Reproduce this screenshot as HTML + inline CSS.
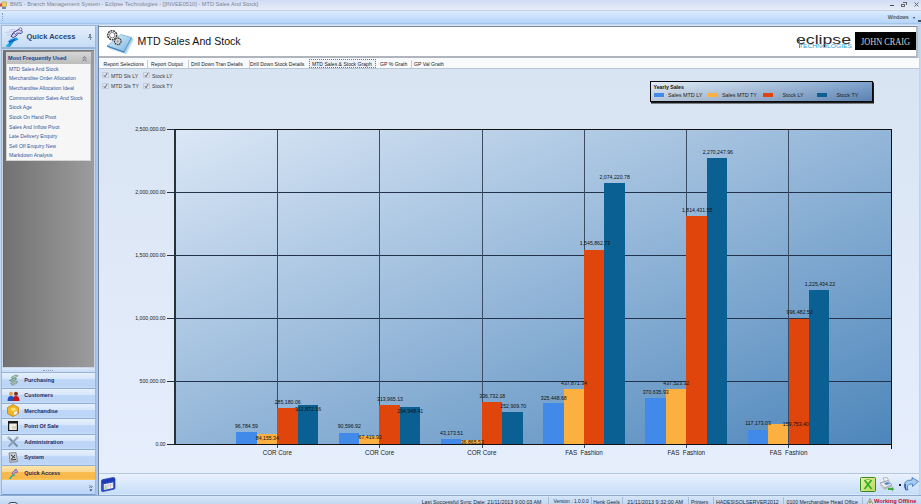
<!DOCTYPE html><html><head><meta charset='utf-8'><style>
*{margin:0;padding:0;box-sizing:border-box}
html,body{width:921px;height:504px;overflow:hidden;background:#c9dcf2}
body{position:relative;font-family:'Liberation Sans',sans-serif;color:#000}
.a{position:absolute}
.t{position:absolute;white-space:nowrap;line-height:1}
svg{display:block}
</style></head><body>
<div style="position:absolute;left:0;top:0;width:921px;height:11px;background:linear-gradient(#cfdcf4,#e8ecf8);border-bottom:1px solid #c3d2e3"></div>
<div style="position:absolute;left:10px;top:2px;font-size:5.65px;color:#7d8696;white-space:nowrap;line-height:1">BMS - Branch Management System - Eclipse Technologies - [[INVEE0510] - MTD Sales And Stock]</div>
<div style="position:absolute;left:0px;top:1px;width:8px;height:9px"><svg width="8" height="9" viewBox="0 0 8 9"><rect x="0" y="2.5" width="2.5" height="3" fill="#c85040"/><rect x="2" y="1" width="4.5" height="4.5" fill="#f0d070" stroke="#b89830" stroke-width="0.6"/><rect x="2" y="6" width="4" height="2" fill="#6a8ac0"/></svg></div>
<div style="position:absolute;left:890px;top:5px;width:4px;height:1px;background:#4a4a4a"></div>
<div style="position:absolute;left:901px;top:3.5px;width:4px;height:3px;border:1px solid #666"></div>
<div style="position:absolute;left:902.5px;top:2px;width:4px;height:3px;border-top:1px solid #666;border-right:1px solid #666"></div>
<div style="position:absolute;left:913.5px;top:1.5px;width:5px;height:5px"><svg width="5" height="5" viewBox="0 0 5 5"><path d="M0.5 0.5 L4.5 4.5 M4.5 0.5 L0.5 4.5" stroke="#555" stroke-width="0.9"/></svg></div>
<div style="position:absolute;left:0;top:11px;width:921px;height:13px;background:linear-gradient(#dcebfc,#b4d5fc);border-bottom:1px solid #a6c4e8"></div>
<div style="position:absolute;left:2px;top:13px;width:1px;height:8px;border-left:1px dotted #8aa0c0"></div>
<div style="position:absolute;left:887.8px;top:15px;font-size:5.1px;color:#1a1a1a;white-space:nowrap;line-height:1">Windows</div>
<div style="position:absolute;left:912.5px;top:16.5px;width:0;height:0;border-left:1.6px solid transparent;border-right:1.6px solid transparent;border-top:2px solid #333"></div>
<div style="position:absolute;left:918px;top:20px;width:3px;height:2px;background:#405060"></div>
<div style="position:absolute;left:0;top:24px;width:921px;height:471px;background:#c4d8f0"></div>
<div style="position:absolute;left:1px;top:25px;width:95px;height:470px;background:#8fb3df;border:1px solid #9bb8dc"></div>
<div style="position:absolute;left:2px;top:26px;width:93px;height:22px;background:linear-gradient(#e4eefb,#c6dcf6);border-bottom:1px solid #9ab4d6"></div>
<div style="position:absolute;left:26.5px;top:32.6px;font-size:7.5px;font-weight:bold;color:#2a4672;white-space:nowrap;line-height:1">Quick Access</div>
<div style="position:absolute;left:3px;top:27px;width:22px;height:21px"><svg width="22" height="21" viewBox="0 0 22 21"><path d="M2 5.5 L11 4.5 M4 8 L10 7.5 M6 3 L12 2.5" stroke="#b0b0d8" stroke-width="0.6"/><path d="M8 9.5 L11 5 L14 3.5 L17 2 L19.5 5 L18 6.5 L15.5 6 L13 9 L10.5 10.5 Z" fill="#dcd8f8" stroke="#2a2a78" stroke-width="0.9"/><circle cx="17.5" cy="2.2" r="1.4" fill="#fff" stroke="#2a2a78" stroke-width="0.6"/><path d="M9 7 L12 6.5 M12 8 L14.5 5.5" stroke="#4a4aa0" stroke-width="0.7"/><path d="M3 19.5 L6.5 15.5 L4.5 14.5 L8 12 L13.5 10.5 L15.5 12.5 L11 14.5 L7 20 Z" fill="#1e98dc"/><path d="M6 15.5 L12 12.5" stroke="#0c60b8" stroke-width="1.4"/><path d="M3 19.5 L6 16.5" stroke="#2ab8e0" stroke-width="1.2"/></svg></div>
<div style="position:absolute;left:89px;top:34px;width:2px;height:3px;background:#7a8aa4"></div>
<div style="position:absolute;left:88px;top:37px;width:4px;height:1px;background:#7a8aa4"></div>
<div style="position:absolute;left:89.5px;top:38px;width:1px;height:2px;background:#7a8aa4"></div>
<div style="position:absolute;left:2px;top:48.5px;width:93px;height:319px;background:#c8d6e8"></div>
<div style="position:absolute;left:3px;top:50px;width:91px;height:316.5px;background:linear-gradient(90deg,#727272,#9c9c9c);border-top:1px solid #7a7a7a;border-left:1px solid #6a6a6a"></div>
<div style="position:absolute;left:5.5px;top:52.3px;width:85.6px;height:108.5px;background:#f6f6f6;border:1px solid #d4d4d4"></div>
<div style="position:absolute;left:6.5px;top:53.3px;width:84px;height:10.7px;background:linear-gradient(#d4d4d4,#bcbcbc)"></div>
<div style="position:absolute;left:8px;top:55.5px;font-size:5.6px;font-weight:bold;color:#223c8c;white-space:nowrap;line-height:1">Most Frequently Used</div>
<div style="position:absolute;left:81.5px;top:55.5px;width:5px;height:6px"><svg width="5" height="6" viewBox="0 0 5 6"><path d="M0.6 2.6 L2.5 0.8 L4.4 2.6 M0.6 5 L2.5 3.2 L4.4 5" stroke="#505050" stroke-width="0.8" fill="none"/></svg></div>
<div style="position:absolute;left:9px;top:66.8px;font-size:5.1px;color:#34569a;white-space:nowrap;line-height:1">MTD Sales And Stock</div>
<div style="position:absolute;left:9px;top:76.4px;font-size:5.1px;color:#34569a;white-space:nowrap;line-height:1">Merchandise Order Allocation</div>
<div style="position:absolute;left:9px;top:86.0px;font-size:5.1px;color:#34569a;white-space:nowrap;line-height:1">Merchandise Allocation Ideal</div>
<div style="position:absolute;left:9px;top:95.7px;font-size:5.1px;color:#34569a;white-space:nowrap;line-height:1">Communication Sales And Stock</div>
<div style="position:absolute;left:9px;top:105.3px;font-size:5.1px;color:#34569a;white-space:nowrap;line-height:1">Stock Age</div>
<div style="position:absolute;left:9px;top:114.9px;font-size:5.1px;color:#34569a;white-space:nowrap;line-height:1">Stock On Hand Pivot</div>
<div style="position:absolute;left:9px;top:124.5px;font-size:5.1px;color:#34569a;white-space:nowrap;line-height:1">Sales And Inflow Pivot</div>
<div style="position:absolute;left:9px;top:134.1px;font-size:5.1px;color:#34569a;white-space:nowrap;line-height:1">Late Delivery Enquiry</div>
<div style="position:absolute;left:9px;top:143.8px;font-size:5.1px;color:#34569a;white-space:nowrap;line-height:1">Sell Off Enquiry New</div>
<div style="position:absolute;left:9px;top:153.4px;font-size:5.1px;color:#34569a;white-space:nowrap;line-height:1">Markdown Analysis</div>
<div style="position:absolute;left:2px;top:367.5px;width:93px;height:5.8px;background:linear-gradient(#dae8fa,#c8dcf6);border-bottom:1px solid #9ab4d6"></div>
<div style="position:absolute;left:43px;top:370px;width:10px;height:1px;border-top:1px dotted #8a9ab8"></div>
<div style="position:absolute;left:2px;top:373.20px;width:93px;height:15.42px;background:linear-gradient(#e6f0fd 0%,#d6e6fb 40%,#bed6f7 44%,#bcd5f7 85%,#c6dcf8 100%);border-bottom:1px solid #92aed4"></div>
<div style="position:absolute;left:24.3px;top:378.00px;font-size:5.5px;font-weight:bold;color:#1c2c60;white-space:nowrap;line-height:1">Purchasing</div>
<div style="position:absolute;left:8px;top:374.20px;width:11px;height:12px"><svg width="11" height="12" viewBox="0 0 11 12"><path d="M3 3.5 L8 0.8 L10.2 1.8 L5.2 4.6 Z" fill="#b8d4c0" stroke="#5a8068" stroke-width="0.6"/><path d="M1.5 6.5 L6.5 3.8 L8.7 4.8 L3.7 7.6 Z" fill="#9cc4a8" stroke="#4a7058" stroke-width="0.6"/><path d="M2.5 9.5 L7.5 6.8 L9.7 7.8 L4.7 10.6 Z" fill="#b0ccb8" stroke="#607868" stroke-width="0.6"/><path d="M3 10.5 L5 11.5 L9.5 9" stroke="#8a9a90" stroke-width="0.6" fill="none"/></svg></div>
<div style="position:absolute;left:2px;top:388.62px;width:93px;height:15.42px;background:linear-gradient(#e6f0fd 0%,#d6e6fb 40%,#bed6f7 44%,#bcd5f7 85%,#c6dcf8 100%);border-bottom:1px solid #92aed4"></div>
<div style="position:absolute;left:24.3px;top:393.42px;font-size:5.5px;font-weight:bold;color:#1c2c60;white-space:nowrap;line-height:1">Customers</div>
<div style="position:absolute;left:7px;top:390.62px;width:13px;height:10px"><svg width="13" height="10" viewBox="0 0 13 10"><circle cx="4" cy="2.8" r="2" fill="#e0a050"/><path d="M0.5 10 Q0.5 5 4 5 Q7.5 5 7.5 10 Z" fill="#2050c0"/><circle cx="9" cy="2.8" r="2" fill="#803020"/><path d="M5.5 10 Q5.5 5 9 5 Q12.5 5 12.5 10 Z" fill="#c01818"/></svg></div>
<div style="position:absolute;left:2px;top:404.04px;width:93px;height:15.42px;background:linear-gradient(#e6f0fd 0%,#d6e6fb 40%,#bed6f7 44%,#bcd5f7 85%,#c6dcf8 100%);border-bottom:1px solid #92aed4"></div>
<div style="position:absolute;left:24.3px;top:408.84px;font-size:5.5px;font-weight:bold;color:#1c2c60;white-space:nowrap;line-height:1">Merchandise</div>
<div style="position:absolute;left:7px;top:404.04px;width:12px;height:13px"><svg width="12" height="13" viewBox="0 0 12 13"><path d="M6 0.5 L11.5 3.5 L11.5 9.5 L6 12.5 L0.5 9.5 L0.5 3.5 Z" fill="#f0b820" stroke="#c87810" stroke-width="0.8"/><path d="M3 5 L7 3.5 L9.5 5.5 L6 7.5 Z" fill="#fde078"/><path d="M7 8 L10 7 L10 10 L7 11 Z" fill="#f8f0e0"/></svg></div>
<div style="position:absolute;left:2px;top:419.46px;width:93px;height:15.42px;background:linear-gradient(#e6f0fd 0%,#d6e6fb 40%,#bed6f7 44%,#bcd5f7 85%,#c6dcf8 100%);border-bottom:1px solid #92aed4"></div>
<div style="position:absolute;left:24.3px;top:424.26px;font-size:5.5px;font-weight:bold;color:#1c2c60;white-space:nowrap;line-height:1">Point Of Sale</div>
<div style="position:absolute;left:8px;top:421.46px;width:10px;height:10px"><svg width="10" height="10" viewBox="0 0 10 10"><rect x="0" y="0" width="10" height="10" fill="#1a1a1a"/><rect x="1.2" y="2.5" width="7.6" height="6.5" fill="#f0ece0"/><rect x="4" y="5" width="4" height="3" fill="#d8d0c0"/></svg></div>
<div style="position:absolute;left:2px;top:434.88px;width:93px;height:15.42px;background:linear-gradient(#e6f0fd 0%,#d6e6fb 40%,#bed6f7 44%,#bcd5f7 85%,#c6dcf8 100%);border-bottom:1px solid #92aed4"></div>
<div style="position:absolute;left:24.3px;top:439.68px;font-size:5.5px;font-weight:bold;color:#1c2c60;white-space:nowrap;line-height:1">Administration</div>
<div style="position:absolute;left:7px;top:435.88px;width:12px;height:12px"><svg width="12" height="12" viewBox="0 0 12 12"><path d="M1.5 1.5 L10.5 10.5" stroke="#7890a8" stroke-width="2"/><path d="M10.5 1.5 L1.5 10.5" stroke="#8aa0b8" stroke-width="1.8"/><circle cx="1.8" cy="1.8" r="1.5" fill="#a8b8c8"/><circle cx="10.2" cy="1.8" r="1.4" fill="#9aacbf"/></svg></div>
<div style="position:absolute;left:2px;top:450.30px;width:93px;height:15.42px;background:linear-gradient(#e6f0fd 0%,#d6e6fb 40%,#bed6f7 44%,#bcd5f7 85%,#c6dcf8 100%);border-bottom:1px solid #92aed4"></div>
<div style="position:absolute;left:24.3px;top:455.10px;font-size:5.5px;font-weight:bold;color:#1c2c60;white-space:nowrap;line-height:1">System</div>
<div style="position:absolute;left:8px;top:452.30px;width:10px;height:11px"><svg width="10" height="11" viewBox="0 0 10 11"><path d="M1 1 L8 0.5 L9.5 9.5 L2 10.5 Z" fill="#c8ccd0" stroke="#6a7078" stroke-width="0.7"/><path d="M3 3 L7 6 M7 3 L3.5 7 M3 8 L8 7.5" stroke="#303840" stroke-width="1"/></svg></div>
<div style="position:absolute;left:2px;top:465.72px;width:93px;height:15.42px;background:linear-gradient(#fde4a8 0%,#fcd890 40%,#f9bc50 44%,#f8b848 85%,#fac868 100%);border-bottom:1px solid #d8a050"></div>
<div style="position:absolute;left:24.3px;top:470.52px;font-size:5.5px;font-weight:bold;color:#1c2c60;white-space:nowrap;line-height:1">Quick Access</div>
<div style="position:absolute;left:7px;top:467.72px;width:12px;height:12px"><svg width="12" height="12" viewBox="0 0 22 21"><path d="M9 9.5 L12.5 5 L15.5 3 L17.5 4 L20 6.5 L18 8 L15 7.5 L12 11 Z" fill="#c8a8e8" stroke="#5a3a98" stroke-width="1.2"/><circle cx="16.5" cy="2.8" r="1.6" fill="#e8d8f8" stroke="#5a3a98" stroke-width="0.9"/><path d="M3.5 19.5 L7.5 14 L9 12.5 L14 11 L15.5 13 L10.5 14.5 L6 20 Z" fill="#18a8b0"/></svg></div>
<div style="position:absolute;left:2px;top:480px;width:93px;height:15px;background:linear-gradient(#d8e8fc,#b8d4fa);border-bottom:1px solid #7a9ccc"></div>
<div style="position:absolute;left:88.5px;top:485px;width:4px;height:7px"><svg width="4" height="7" viewBox="0 0 4 7"><path d="M0.3 0.5 L1.5 1.7 L0.3 2.9 M2 0.5 L3.2 1.7 L2 2.9" stroke="#222" stroke-width="0.6" fill="none"/><path d="M0.5 4.5 L3.3 4.5 L1.9 6.3 Z" fill="#222"/></svg></div>
<div style="position:absolute;left:96px;top:25px;width:2px;height:470px;background:#aac6ea"></div>
<div style="position:absolute;left:98px;top:25px;width:822px;height:470px;background:#dde8f6;border-left:1px solid #6f86a6;border-right:2px solid #c0d4ec"></div>
<div style="position:absolute;left:99px;top:26px;width:819px;height:32px;background:#fff;border-top:1px solid #7a8494;border-bottom:2px solid #b0b4bc;border-right:2px solid #b8bcc4"></div>
<div style="position:absolute;left:137.6px;top:35.9px;font-size:10.6px;color:#111;white-space:nowrap;line-height:1">MTD Sales And Stock</div>
<div style="position:absolute;left:104px;top:27px;width:34px;height:30px"><svg width="34" height="30" viewBox="0 0 34 30"><defs><linearGradient id="pg" x1="0" y1="0" x2="1" y2="1"><stop offset="0" stop-color="#e0f0fa"/><stop offset="1" stop-color="#7ab8e0"/></linearGradient></defs><path d="M5 21 L19 9.5 L29.5 12.5 L22 27 Z" fill="#cfe6f6" stroke="#9ccbe8" stroke-width="0.5"/><path d="M4 20 L18 8.5 L28.5 11.5 L21 26 Z" fill="#b4daf2" stroke="#80b8e0" stroke-width="0.5"/><path d="M3 19 L17 7.5 L27.5 10.5 L20 25 Z" fill="url(#pg)" stroke="#5a9ed0" stroke-width="0.6"/><path d="M3 19 L20 25" stroke="#3a7ab8" stroke-width="1.1"/><path d="M20 25 L27.5 10.5" stroke="#4a88c0" stroke-width="0.7"/><circle cx="8.2" cy="8.2" r="4.5" fill="#fff" stroke="#3c3c3c" stroke-width="1.5" stroke-dasharray="2 0.7"/><circle cx="8.2" cy="8.2" r="2.7" fill="#fff" stroke="#6a6a6a" stroke-width="0.9"/><circle cx="13.8" cy="14.3" r="3.3" fill="#c8ccd0" stroke="#404040" stroke-width="1.2" stroke-dasharray="1.6 0.6"/><circle cx="13.8" cy="14.3" r="1.7" fill="#a0a4aa" stroke="#e8e8e8" stroke-width="0.7"/></svg></div>
<div style="position:absolute;left:795.5px;top:32.5px;font-size:13.5px;color:#2a2a2a;white-space:nowrap;line-height:1;transform:scaleX(1.31);transform-origin:left top">eclipse</div>
<div style="position:absolute;left:798.5px;top:44.6px;font-size:4.9px;color:#2a9cc8;white-space:nowrap;line-height:1;transform:scaleX(1.36);transform-origin:left top">TECHNOLOGIES</div>
<div style="position:absolute;left:799px;top:39px;width:1px;height:9px;background:#2a9cc8"></div>
<div style="position:absolute;left:855px;top:32px;width:61px;height:18px;background:#000"></div>
<div style="position:absolute;left:861px;top:37px;font-family:'Liberation Serif',serif;font-size:9.8px;color:#d0d0d0;white-space:nowrap;line-height:1;transform:scaleX(0.845);transform-origin:left top">JOHN CRAIG</div>
<div style="position:absolute;left:99px;top:58px;width:820px;height:11px;background:#f8fafc;border-bottom:1px solid #b9c6d6"></div>
<div style="position:absolute;left:309px;top:58.5px;width:67px;height:9.5px;border:1px dotted #707880;background:#eef2f8"></div>
<div style="position:absolute;left:103.5px;top:61.5px;font-size:5.1px;color:#222;white-space:nowrap;line-height:1">Report Selections</div>
<div style="position:absolute;left:151px;top:61.5px;font-size:5.1px;color:#222;white-space:nowrap;line-height:1">Report Output</div>
<div style="position:absolute;left:191px;top:61.5px;font-size:5.1px;color:#222;white-space:nowrap;line-height:1">Drill Down Tran Details</div>
<div style="position:absolute;left:250px;top:61.5px;font-size:5.1px;color:#222;white-space:nowrap;line-height:1">Drill Down Stock Details</div>
<div style="position:absolute;left:312px;top:61.5px;font-size:5.1px;color:#222;white-space:nowrap;line-height:1">MTD Sales &amp; Stock Graph</div>
<div style="position:absolute;left:380px;top:61.5px;font-size:5.1px;color:#222;white-space:nowrap;line-height:1">GP % Grath</div>
<div style="position:absolute;left:414px;top:61.5px;font-size:5.1px;color:#222;white-space:nowrap;line-height:1">GP Val Grath</div>
<div style="position:absolute;left:147px;top:59.5px;width:1px;height:8.5px;background:#c4ccd8"></div>
<div style="position:absolute;left:188px;top:59.5px;width:1px;height:8.5px;background:#c4ccd8"></div>
<div style="position:absolute;left:248.5px;top:59.5px;width:1px;height:8.5px;background:#c4ccd8"></div>
<div style="position:absolute;left:410.5px;top:59.5px;width:1px;height:8.5px;background:#c4ccd8"></div>
<div style="position:absolute;left:99px;top:69px;width:820px;height:404px;background:linear-gradient(#d8e4f2,#e6eefc)"></div>
<div style="position:absolute;left:102px;top:72px;width:6.5px;height:6px;border:1px solid #c4ccd8;background:#dfe6f0"></div>
<div style="position:absolute;left:102px;top:72px;width:7px;height:6px"><svg width="7" height="6" viewBox="0 0 7 6"><path d="M1.8 3.2 L3 4.8 L5 1" fill="none" stroke="#4a5060" stroke-width="0.8"/></svg></div>
<div style="position:absolute;left:111px;top:73.5px;font-size:5.2px;color:#3a3a3a;white-space:nowrap;line-height:1">MTD Sls LY</div>
<div style="position:absolute;left:143px;top:72px;width:6.5px;height:6px;border:1px solid #c4ccd8;background:#dfe6f0"></div>
<div style="position:absolute;left:143px;top:72px;width:7px;height:6px"><svg width="7" height="6" viewBox="0 0 7 6"><path d="M1.8 3.2 L3 4.8 L5 1" fill="none" stroke="#4a5060" stroke-width="0.8"/></svg></div>
<div style="position:absolute;left:152px;top:73.5px;font-size:5.2px;color:#3a3a3a;white-space:nowrap;line-height:1">Stock LY</div>
<div style="position:absolute;left:102px;top:82.5px;width:6.5px;height:6px;border:1px solid #c4ccd8;background:#dfe6f0"></div>
<div style="position:absolute;left:102px;top:82.5px;width:7px;height:6px"><svg width="7" height="6" viewBox="0 0 7 6"><path d="M1.8 3.2 L3 4.8 L5 1" fill="none" stroke="#4a5060" stroke-width="0.8"/></svg></div>
<div style="position:absolute;left:111px;top:84.0px;font-size:5.2px;color:#3a3a3a;white-space:nowrap;line-height:1">MTD Sls TY</div>
<div style="position:absolute;left:143px;top:82.5px;width:6.5px;height:6px;border:1px solid #c4ccd8;background:#dfe6f0"></div>
<div style="position:absolute;left:143px;top:82.5px;width:7px;height:6px"><svg width="7" height="6" viewBox="0 0 7 6"><path d="M1.8 3.2 L3 4.8 L5 1" fill="none" stroke="#4a5060" stroke-width="0.8"/></svg></div>
<div style="position:absolute;left:152px;top:84.0px;font-size:5.2px;color:#3a3a3a;white-space:nowrap;line-height:1">Stock TY</div>
<div style="position:absolute;left:649.5px;top:80.8px;width:223px;height:21px;background:linear-gradient(rgba(255,255,255,0.12),rgba(0,20,70,0.16)),linear-gradient(90deg,#dfeaf5 0%,#b0c8e2 45%,#6c96c6 100%);border:1px solid #0a0a0a;box-shadow:1px 1.5px 0 #1a1a1a"></div>
<div style="position:absolute;left:653.5px;top:84.5px;font-size:5.2px;font-weight:bold;color:#111;white-space:nowrap;line-height:1">Yearly Sales</div>
<div style="position:absolute;left:654px;top:93px;width:10px;height:4px;background:#418aea"></div>
<div style="position:absolute;left:668px;top:92.5px;font-size:5.4px;color:#222;white-space:nowrap;line-height:1">Sales MTD LY</div>
<div style="position:absolute;left:708px;top:93px;width:10px;height:4px;background:#fbb040"></div>
<div style="position:absolute;left:722px;top:92.5px;font-size:5.4px;color:#222;white-space:nowrap;line-height:1">Sales MTD TY</div>
<div style="position:absolute;left:762.5px;top:93px;width:10px;height:4px;background:#e0460c"></div>
<div style="position:absolute;left:782.5px;top:92.5px;font-size:5.4px;color:#222;white-space:nowrap;line-height:1">Stock LY</div>
<div style="position:absolute;left:816.5px;top:93px;width:10px;height:4px;background:#0a6093"></div>
<div style="position:absolute;left:836.5px;top:92.5px;font-size:5.4px;color:#222;white-space:nowrap;line-height:1">Stock TY</div>
<div style="position:absolute;left:174.5px;top:129.3px;width:717.0px;height:315.0px;background:linear-gradient(to bottom right,#dbe7f6,#4d86bb)"></div>
<div style="position:absolute;left:167px;top:444px;width:724.5px;height:1px;background:#1a2638"></div>
<div style="position:absolute;right:755.5px;top:441.80px;font-size:5.2px;color:#222;white-space:nowrap;line-height:1">0.00</div>
<div style="position:absolute;left:167px;top:381px;width:724.5px;height:1px;background:#22324a"></div>
<div style="position:absolute;right:755.5px;top:378.80px;font-size:5.2px;color:#222;white-space:nowrap;line-height:1">500,000.00</div>
<div style="position:absolute;left:167px;top:318px;width:724.5px;height:1px;background:#22324a"></div>
<div style="position:absolute;right:755.5px;top:315.80px;font-size:5.2px;color:#222;white-space:nowrap;line-height:1">1,000,000.00</div>
<div style="position:absolute;left:167px;top:255px;width:724.5px;height:1px;background:#22324a"></div>
<div style="position:absolute;right:755.5px;top:252.80px;font-size:5.2px;color:#222;white-space:nowrap;line-height:1">1,500,000.00</div>
<div style="position:absolute;left:167px;top:192px;width:724.5px;height:1px;background:#22324a"></div>
<div style="position:absolute;right:755.5px;top:189.80px;font-size:5.2px;color:#222;white-space:nowrap;line-height:1">2,000,000.00</div>
<div style="position:absolute;left:167px;top:129px;width:724.5px;height:1px;background:#22324a"></div>
<div style="position:absolute;right:755.5px;top:126.80px;font-size:5.2px;color:#222;white-space:nowrap;line-height:1">2,500,000.00</div>
<div style="position:absolute;left:277px;top:129.3px;width:1px;height:319.0px;background:#3c4c62"></div>
<div style="position:absolute;left:262.65px;top:449.60px;font-size:6.28px;color:#222;white-space:nowrap;line-height:1">COR Core</div>
<div style="position:absolute;left:379px;top:129.3px;width:1px;height:319.0px;background:#3c4c62"></div>
<div style="position:absolute;left:364.91px;top:449.60px;font-size:6.28px;color:#222;white-space:nowrap;line-height:1">COR Core</div>
<div style="position:absolute;left:482px;top:129.3px;width:1px;height:319.0px;background:#3c4c62"></div>
<div style="position:absolute;left:467.17px;top:449.60px;font-size:6.28px;color:#222;white-space:nowrap;line-height:1">COR Core</div>
<div style="position:absolute;left:584px;top:129.3px;width:1px;height:319.0px;background:#3c4c62"></div>
<div style="position:absolute;left:565.23px;top:449.60px;font-size:6.28px;color:#222;white-space:nowrap;line-height:1">FAS&nbsp; Fashion</div>
<div style="position:absolute;left:686px;top:129.3px;width:1px;height:319.0px;background:#3c4c62"></div>
<div style="position:absolute;left:667.49px;top:449.60px;font-size:6.28px;color:#222;white-space:nowrap;line-height:1">FAS&nbsp; Fashion</div>
<div style="position:absolute;left:788px;top:129.3px;width:1px;height:319.0px;background:#3c4c62"></div>
<div style="position:absolute;left:769.75px;top:449.60px;font-size:6.28px;color:#222;white-space:nowrap;line-height:1">FAS&nbsp; Fashion</div>
<div style="position:absolute;left:236.40px;top:432.11px;width:20.40px;height:12.19px;background:#418aea"></div>
<div style="position:absolute;left:256.80px;top:433.70px;width:20.40px;height:10.60px;background:#fbb040"></div>
<div style="position:absolute;left:277.20px;top:408.37px;width:20.40px;height:35.93px;background:#e0460c"></div>
<div style="position:absolute;left:297.60px;top:404.88px;width:20.40px;height:39.42px;background:#0a6093"></div>
<div style="position:absolute;left:338.66px;top:432.88px;width:20.40px;height:11.42px;background:#418aea"></div>
<div style="position:absolute;left:359.06px;top:435.81px;width:20.40px;height:8.49px;background:#fbb040"></div>
<div style="position:absolute;left:379.46px;top:404.74px;width:20.40px;height:39.56px;background:#e0460c"></div>
<div style="position:absolute;left:399.86px;top:407.14px;width:20.40px;height:37.16px;background:#0a6093"></div>
<div style="position:absolute;left:440.92px;top:438.86px;width:20.40px;height:5.44px;background:#418aea"></div>
<div style="position:absolute;left:461.32px;top:439.65px;width:20.40px;height:4.65px;background:#fbb040"></div>
<div style="position:absolute;left:481.72px;top:401.87px;width:20.40px;height:42.43px;background:#e0460c"></div>
<div style="position:absolute;left:502.12px;top:412.43px;width:20.40px;height:31.87px;background:#0a6093"></div>
<div style="position:absolute;left:543.18px;top:403.29px;width:20.40px;height:41.01px;background:#418aea"></div>
<div style="position:absolute;left:563.58px;top:389.13px;width:20.40px;height:55.17px;background:#fbb040"></div>
<div style="position:absolute;left:583.98px;top:249.52px;width:20.40px;height:194.78px;background:#e0460c"></div>
<div style="position:absolute;left:604.38px;top:182.95px;width:20.40px;height:261.35px;background:#0a6093"></div>
<div style="position:absolute;left:645.44px;top:397.60px;width:20.40px;height:46.70px;background:#418aea"></div>
<div style="position:absolute;left:665.84px;top:389.17px;width:20.40px;height:55.13px;background:#fbb040"></div>
<div style="position:absolute;left:686.24px;top:215.68px;width:20.40px;height:228.62px;background:#e0460c"></div>
<div style="position:absolute;left:706.64px;top:158.25px;width:20.40px;height:286.05px;background:#0a6093"></div>
<div style="position:absolute;left:747.70px;top:429.54px;width:20.40px;height:14.76px;background:#418aea"></div>
<div style="position:absolute;left:768.10px;top:424.17px;width:20.40px;height:20.13px;background:#fbb040"></div>
<div style="position:absolute;left:788.50px;top:318.74px;width:20.40px;height:125.56px;background:#e0460c"></div>
<div style="position:absolute;left:808.90px;top:289.90px;width:20.40px;height:154.40px;background:#0a6093"></div>
<div style="position:absolute;left:174.0px;top:129.3px;width:2px;height:315.0px;background:#2a3038"></div>
<div style="position:absolute;left:890.5px;top:129.3px;width:1.5px;height:320.0px;background:#111"></div>
<div style="position:absolute;left:174.5px;top:128.8px;width:717.0px;height:1.5px;background:#111"></div>
<div style="position:absolute;left:174.5px;top:443.8px;width:717.0px;height:1.5px;background:#111"></div>
<div style="position:absolute;left:234.90px;top:424.20px;font-size:5.2px;color:#111;white-space:nowrap;line-height:1">96,784.59</div>
<div style="position:absolute;left:255.80px;top:435.60px;font-size:5.2px;color:#111;white-space:nowrap;line-height:1">84,155.34</div>
<div style="position:absolute;left:274.70px;top:400.10px;font-size:5.2px;color:#111;white-space:nowrap;line-height:1">285,180.06</div>
<div style="position:absolute;left:295.10px;top:406.60px;font-size:5.2px;color:#111;white-space:nowrap;line-height:1">312,872.16</div>
<div style="position:absolute;left:337.70px;top:424.40px;font-size:5.2px;color:#111;white-space:nowrap;line-height:1">90,596.92</div>
<div style="position:absolute;left:358.60px;top:435.10px;font-size:5.2px;color:#111;white-space:nowrap;line-height:1">67,419.93</div>
<div style="position:absolute;left:377.00px;top:396.70px;font-size:5.2px;color:#111;white-space:nowrap;line-height:1">313,965.13</div>
<div style="position:absolute;left:397.30px;top:409.30px;font-size:5.2px;color:#111;white-space:nowrap;line-height:1">294,948.41</div>
<div style="position:absolute;left:440.00px;top:430.70px;font-size:5.2px;color:#111;white-space:nowrap;line-height:1">43,173.51</div>
<div style="position:absolute;left:460.70px;top:440.10px;font-size:5.2px;color:#111;white-space:nowrap;line-height:1">36,865.53</div>
<div style="position:absolute;left:479.30px;top:394.10px;font-size:5.2px;color:#111;white-space:nowrap;line-height:1">336,732.18</div>
<div style="position:absolute;left:500.30px;top:404.40px;font-size:5.2px;color:#111;white-space:nowrap;line-height:1">252,909.70</div>
<div style="position:absolute;left:540.80px;top:395.50px;font-size:5.2px;color:#111;white-space:nowrap;line-height:1">325,448.68</div>
<div style="position:absolute;left:561.00px;top:380.70px;font-size:5.2px;color:#111;white-space:nowrap;line-height:1">437,871.34</div>
<div style="position:absolute;left:579.80px;top:241.30px;font-size:5.2px;color:#111;white-space:nowrap;line-height:1">1,545,862.73</div>
<div style="position:absolute;left:599.50px;top:175.20px;font-size:5.2px;color:#111;white-space:nowrap;line-height:1">2,074,220.78</div>
<div style="position:absolute;left:642.70px;top:389.60px;font-size:5.2px;color:#111;white-space:nowrap;line-height:1">370,635.93</div>
<div style="position:absolute;left:663.30px;top:380.70px;font-size:5.2px;color:#111;white-space:nowrap;line-height:1">437,523.32</div>
<div style="position:absolute;left:682.00px;top:207.50px;font-size:5.2px;color:#111;white-space:nowrap;line-height:1">1,814,431.55</div>
<div style="position:absolute;left:702.70px;top:150.10px;font-size:5.2px;color:#111;white-space:nowrap;line-height:1">2,270,247.96</div>
<div style="position:absolute;left:745.20px;top:421.00px;font-size:5.2px;color:#111;white-space:nowrap;line-height:1">117,173.03</div>
<div style="position:absolute;left:782.80px;top:421.60px;font-size:5.2px;color:#111;white-space:nowrap;line-height:1">159,753.40</div>
<div style="position:absolute;left:786.60px;top:310.20px;font-size:5.2px;color:#111;white-space:nowrap;line-height:1">996,482.50</div>
<div style="position:absolute;left:804.80px;top:282.30px;font-size:5.2px;color:#111;white-space:nowrap;line-height:1">1,225,434.22</div>
<div style="position:absolute;left:99px;top:473px;width:820px;height:21px;background:linear-gradient(#eaf2fd,#c6ddf8);border-top:1px solid #b4c8e0"></div>
<div style="position:absolute;left:101px;top:476.5px;width:15px;height:15px"><svg width="15" height="15" viewBox="0 0 15 15"><path d="M0.5 4 Q0.5 2.8 1.8 2.6 L12 0.5 Q14 0.3 14 2 L14 11 Q14 12 13 12.2 L2 14.5 Q0.5 14.8 0.5 13.5 Z" fill="#2a4cc8" stroke="#1a2a90" stroke-width="0.6"/><path d="M1 4 L13.5 1.2 L13.5 3.5 L1 6.2 Z" fill="#1c36b0"/><path d="M2.8 7.2 L12.2 5.4 L12.2 11 L2.8 13 Z" fill="#eef2fa"/><path d="M4.5 7.5 L4.5 12.5 M7 7 L7 12 M9.5 6.5 L9.5 11.5 M3 9.5 L12 7.8" stroke="#c8a0b8" stroke-width="0.5"/><path d="M3.5 10 L6 9.5 L6 12 L3.5 12.6 Z" fill="#a8d8a0"/></svg></div>
<div style="position:absolute;left:860px;top:477px;width:16px;height:15px"><svg width="16" height="15" viewBox="0 0 16 15"><defs><linearGradient id="xg" x1="0" y1="0" x2="1" y2="1"><stop offset="0" stop-color="#e8f0a8"/><stop offset="1" stop-color="#b8d860"/></linearGradient></defs><rect x="0.5" y="0.5" width="15" height="14" rx="1" fill="url(#xg)" stroke="#3a8a20" stroke-width="1"/><path d="M4.5 3 L11.5 12 M11.5 3 L4.5 12" stroke="#30b020" stroke-width="1.8"/><path d="M6 2.5 L10 2.5" stroke="#6ac040" stroke-width="0.8"/></svg></div>
<div style="position:absolute;left:879px;top:477px;width:15px;height:15px"><svg width="15" height="15" viewBox="0 0 15 15"><path d="M4 1 L8 0.5 L10 4 L6 5 Z" fill="#f4f4f4" stroke="#8a9098" stroke-width="0.6"/><path d="M1 6 L9 3.5 L13 8 L5 11 Z" fill="#e8eaee" stroke="#7a808a" stroke-width="0.7"/><path d="M5 6 L9 5 L11 7 L7 8 Z" fill="#4a88d0"/><path d="M1 6 L5 11 L5 13 L1 8.5 Z" fill="#c8ccd2"/><path d="M5 11 L13 8 L13 10 L5 13 Z" fill="#b4bac2"/><path d="M9 11 L13 11 L13 9.5 L15 12 L13 14.5 L13 13 L9 13 Z" fill="#40a840"/></svg></div>
<div style="position:absolute;left:899px;top:484px;width:1.5px;height:1.5px;background:#222"></div>
<div style="position:absolute;left:903px;top:477px;width:16px;height:14px"><svg width="16" height="14" viewBox="0 0 16 14"><path d="M3 13 Q0 9 2 5.5 Q4 2.5 9 3 L9 0.5 L15.5 4.5 L9.5 9.5 L9.5 7 Q5.5 6.5 4.5 9 Q4 11 5 13 Z" fill="#a8ccf0" stroke="#3a70c0" stroke-width="0.8"/><path d="M3 13 Q1.5 10 2.5 7" stroke="#2a5ab0" stroke-width="1.4" fill="none"/></svg></div>
<div style="position:absolute;left:0;top:495px;width:921px;height:9px;background:linear-gradient(#d6e6f8,#c2d8f2);border-top:1px solid #8eaad0"></div>
<div style="position:absolute;left:421.7px;top:499.5px;font-size:5.28px;color:#1a2a40;white-space:nowrap;line-height:1">Last Successful Sync Date: 21/11/2013 9:00:03 AM</div>
<div style="position:absolute;left:553.5px;top:499.5px;font-size:4.9px;color:#1a2a40;white-space:nowrap;line-height:1">Version : 1.0.0.0</div>
<div style="position:absolute;left:593.2px;top:499.5px;font-size:5.11px;color:#1a2a40;white-space:nowrap;line-height:1">Henk Geels</div>
<div style="position:absolute;left:627.3px;top:499.5px;font-size:5.45px;color:#1a2a40;white-space:nowrap;line-height:1">21/11/2013 9:32:00 AM</div>
<div style="position:absolute;left:690.9px;top:499.5px;font-size:5.05px;color:#1a2a40;white-space:nowrap;line-height:1">Printers</div>
<div style="position:absolute;left:715.9px;top:499.5px;font-size:5.23px;color:#1a2a40;white-space:nowrap;line-height:1">HADES\SQLSERVER2012</div>
<div style="position:absolute;left:786.6px;top:499.5px;font-size:5.18px;color:#1a2a40;white-space:nowrap;line-height:1">0100 Merchandise Head Office</div>
<div style="position:absolute;left:548px;top:497px;width:1px;height:7px;background:#a8bcd4"></div>
<div style="position:absolute;left:591px;top:497px;width:1px;height:7px;background:#a8bcd4"></div>
<div style="position:absolute;left:622px;top:497px;width:1px;height:7px;background:#a8bcd4"></div>
<div style="position:absolute;left:688px;top:497px;width:1px;height:7px;background:#a8bcd4"></div>
<div style="position:absolute;left:713px;top:497px;width:1px;height:7px;background:#a8bcd4"></div>
<div style="position:absolute;left:783px;top:497px;width:1px;height:7px;background:#a8bcd4"></div>
<div style="position:absolute;left:862px;top:497px;width:1px;height:7px;background:#a8bcd4"></div>
<div style="position:absolute;left:873.9px;top:499.2px;font-size:5.72px;font-weight:bold;color:#c0101c;white-space:nowrap;line-height:1">Working Offline</div>
<div style="position:absolute;left:8px;top:501.5px;width:10px;height:6px;border:1.2px solid #3a4a5a;border-radius:5px;background:#dde8f4"></div>
<div style="position:absolute;left:865.5px;top:497.5px;width:8px;height:8px"><svg width="8" height="8" viewBox="0 0 8 8"><path d="M4 0.6 L7.6 7.6 L0.4 7.6 Z" fill="#f4ecc4" stroke="#7a7460" stroke-width="0.7"/><path d="M4 3 L4 5.5" stroke="#333" stroke-width="0.8"/></svg></div>
</body></html>
